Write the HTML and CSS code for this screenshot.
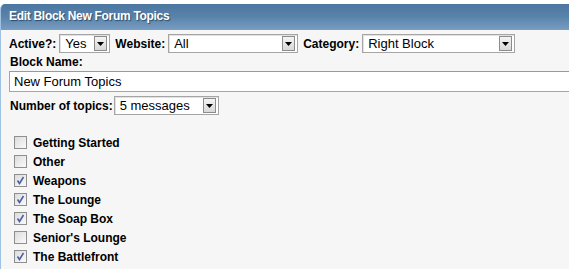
FILE: index.html
```html
<!DOCTYPE html>
<html>
<head>
<meta charset="utf-8">
<title>Edit Block</title>
<link rel="stylesheet" href="styles.css">
</head>
<body>
<div class="panel">
  <div class="header">Edit Block New Forum Topics</div>
  <div class="body">
    <div class="row first">
      <span class="lbl">Active?:</span>
      <div class="select w-yes"><span class="val">Yes</span><span class="btn"><svg width="7" height="4" viewBox="0 0 7 4"><path d="M0 0H7L3.5 4Z" fill="#000"/></svg></span></div>
      <span class="lbl">Website:</span>
      <div class="select w-site"><span class="val">All</span><span class="btn"><svg width="7" height="4" viewBox="0 0 7 4"><path d="M0 0H7L3.5 4Z" fill="#000"/></svg></span></div>
      <span class="lbl">Category:</span>
      <div class="select w-cat"><span class="val">Right Block</span><span class="btn"><svg width="7" height="4" viewBox="0 0 7 4"><path d="M0 0H7L3.5 4Z" fill="#000"/></svg></span></div>
    </div>
    <div class="lbl name-lbl">Block Name:</div>
    <div class="input">New Forum Topics</div>
    <div class="row third">
      <span class="lbl">Number of topics:</span>
      <div class="select w-num"><span class="val">5 messages</span><span class="btn"><svg width="7" height="4" viewBox="0 0 7 4"><path d="M0 0H7L3.5 4Z" fill="#000"/></svg></span></div>
    </div>
    <ul class="list">
      <li><span class="cb"></span>Getting Started</li>
      <li><span class="cb"></span>Other</li>
      <li><span class="cb on"><svg width="11" height="11" viewBox="0 0 11 11"><path d="M2.5 5.5L4.5 8.5L8.5 2" fill="none" stroke="#4c5fa6" stroke-width="1.6"/></svg></span>Weapons</li>
      <li><span class="cb on"><svg width="11" height="11" viewBox="0 0 11 11"><path d="M2.5 5.5L4.5 8.5L8.5 2" fill="none" stroke="#4c5fa6" stroke-width="1.6"/></svg></span>The Lounge</li>
      <li><span class="cb on"><svg width="11" height="11" viewBox="0 0 11 11"><path d="M2.5 5.5L4.5 8.5L8.5 2" fill="none" stroke="#4c5fa6" stroke-width="1.6"/></svg></span>The Soap Box</li>
      <li><span class="cb"></span>Senior's Lounge</li>
      <li><span class="cb on"><svg width="11" height="11" viewBox="0 0 11 11"><path d="M2.5 5.5L4.5 8.5L8.5 2" fill="none" stroke="#4c5fa6" stroke-width="1.6"/></svg></span>The Battlefront</li>
      <li><span class="cb"></span></li>
    </ul>
  </div>
</div>
</body>
</html>
```

FILE: styles.css
```css
html, body {
  margin: 0;
  padding: 0;
  overflow: hidden;
  background: #ffffff;
}
body {
  font-family: "Liberation Sans", Arial, sans-serif;
  color: #000;
}
.panel {
  margin-top: 4px;
  width: 640px;
  height: 300px;
  background: #f6f6f6;
  border-left: 1px solid #9fc2e2;
  border-top-left-radius: 5px;
  overflow: hidden;
}
.header {
  height: 26px;
  line-height: 25px;
  padding-left: 8px;
  color: #fff;
  font-weight: bold;
  font-size: 12px;
  letter-spacing: -0.3px;
  text-shadow: 1px 1px 1px #2d4a66;
  background: linear-gradient(to bottom, #4a76a0 0%, #5a83ab 50%, #7a9dc1 100%);
}
.body {
  padding: 4px 0 0 8px;
}
.row {
  display: flex;
  align-items: center;
  height: 19px;
}
.lbl {
  font-size: 12px;
  font-weight: bold;
  line-height: 14px;
}
.row .lbl {
  margin-right: 3px;
}
.select {
  box-sizing: border-box;
  height: 19px;
  display: flex;
  align-items: center;
  justify-content: space-between;
  background: #fff;
  border: 1px solid #a5a5a5;
  box-shadow: inset 1px 1px 0 #e2e2e2;
  margin-right: 5px;
}
.select .val {
  font-size: 13px;
  padding-left: 5px;
  line-height: 17px;
}
.select .btn {
  box-sizing: border-box;
  width: 13px;
  height: 15px;
  margin-right: 2px;
  border: 1px solid #8c8c8c;
  background: linear-gradient(to bottom, #f4f4f4, #d8d8d8);
  display: flex;
  align-items: center;
  justify-content: center;
}
.w-yes { width: 51px; }
.w-site { width: 130px; }
.w-cat { width: 153px; }
.w-num { width: 105px; }
.w-cat-lbl { margin-right: 1px; }
.name-lbl {
  margin-top: 2px;
  padding-left: 1px;
}
.input {
  box-sizing: border-box;
  margin-top: 2px;
  width: 640px;
  height: 21px;
  line-height: 19px;
  font-size: 13px;
  padding-left: 4px;
  background: #fff;
  border: 1px solid #a5a5a5;
  border-top-color: #999;
}
.third {
  margin-top: 4px;
}
.third .lbl {
  padding-left: 1px;
  margin-right: 1px;
}
.list {
  list-style: none;
  margin: 18px 0 0 0;
  padding: 0 0 0 5px;
}
.list li {
  display: flex;
  align-items: center;
  height: 19px;
  font-size: 12px;
  font-weight: bold;
}
.cb {
  box-sizing: border-box;
  width: 13px;
  height: 13px;
  margin-right: 6px;
  border: 1px solid #8f8f8f;
  background: linear-gradient(135deg, #dcdcdc, #fafafa);
  display: flex;
  align-items: center;
  justify-content: center;
}
```
